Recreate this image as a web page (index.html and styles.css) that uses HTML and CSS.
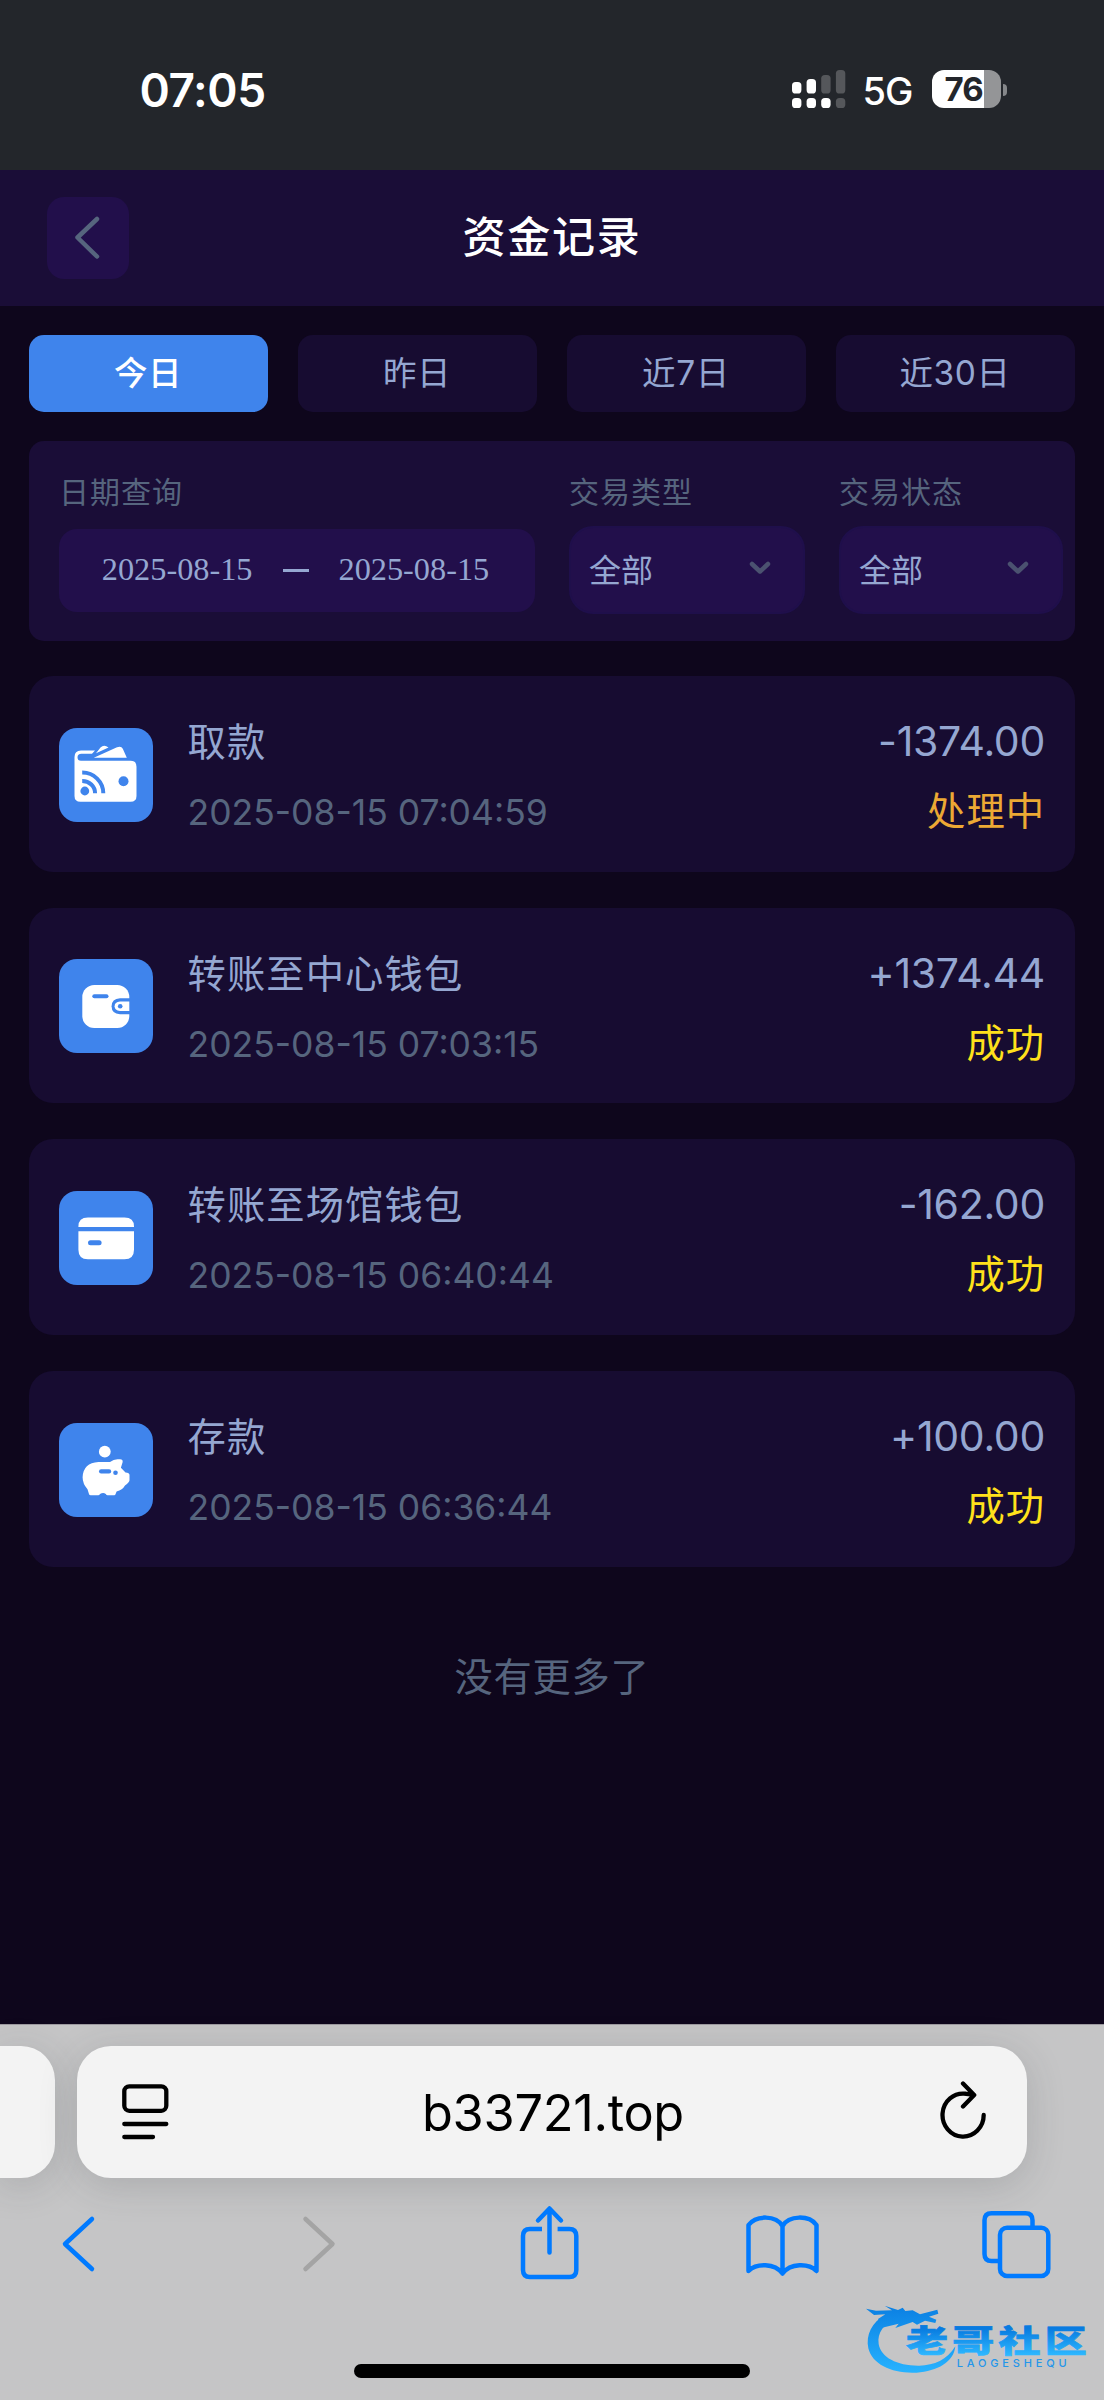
FILE: index.html
```html
<!DOCTYPE html>
<html lang="zh-CN">
<head>
<meta charset="utf-8">
<title>资金记录</title>
<link rel="stylesheet" href="styles.css">
</head>
<body>
<div class="phone">
  <div class="status-bar">
    <div class="clock">07:05</div>
    <div class="status-right">
      <svg class="signal" viewBox="0 0 54 38">
        <g fill="#fff"><rect x="0" y="12" width="9.4" height="11.5" rx="3.6"/><rect x="14.6" y="9" width="9.4" height="14.5" rx="3.6"/><rect x="0" y="28" width="9.4" height="10" rx="3.6"/><rect x="14.6" y="28" width="9.4" height="10" rx="3.6"/><rect x="29.2" y="28" width="9.4" height="10" rx="3.6"/></g>
        <g fill="#55575b"><rect x="29.2" y="5" width="9.4" height="18.5" rx="3.6"/><rect x="43.9" y="0" width="9.4" height="23.5" rx="3.6"/><rect x="43.9" y="28" width="9.4" height="10" rx="3.6"/></g>
      </svg>
      <span class="network">5G</span>
      <div class="battery"><span>76</span></div>
      <i class="battery-nub"></i>
    </div>
  </div>

  <header class="header">
    <button class="back" aria-label="返回"><svg viewBox="0 0 82 82"><path d="M50 22 30.500 40.500 50 59.500"/></svg></button>
    <h1>资金记录</h1>
  </header>

  <main class="content">
    <nav class="tabs">
      <button class="tab active">今日</button>
      <button class="tab">昨日</button>
      <button class="tab">近7日</button>
      <button class="tab">近30日</button>
    </nav>

    <section class="filter">
      <div class="field date-field">
        <label>日期查询</label>
        <div class="date-range"><span>2025-08-15</span><i></i><span>2025-08-15</span></div>
      </div>
      <div class="field type-field">
        <label>交易类型</label>
        <div class="select"><span>全部</span><svg viewBox="0 0 22 14"><path d="M3 3 11 10.500 19 3"/></svg></div>
      </div>
      <div class="field state-field">
        <label>交易状态</label>
        <div class="select"><span>全部</span><svg viewBox="0 0 22 14"><path d="M3 3 11 10.500 19 3"/></svg></div>
      </div>
    </section>

    <section class="records">
      <article class="record">
        <svg class="tile" viewBox="0 0 94 94">
          <path class="w" d="M15.500 68V29q0-6.500 6.500-6.500h14l-3 3.200H22.500q-4 0-4 3.500t3.500 3.500h49.500q6 0 6 6V68q0 5.800-6 5.800h-50q-6 0-6-5.800Z"/>
          <path class="w" d="M34.800 29.800 58 19.300q4.200-1.800 5.800 1.500l4 9ZM37 25.200l4.500-5.700q3.500-3.400 8 0Z"/>
          <circle class="b" cx="25.800" cy="63" r="4.400"/><circle class="b" cx="64.500" cy="53.300" r="5"/>
          <path class="line" d="M23.200 52.900a12.800 12.400 0 0 1 12.900 12.400M23.200 44.500a21 20.800 0 0 1 21.100 20.800"/>
        </svg>
        <div class="info"><h2>取款</h2><time>2025-08-15 07:04:59</time></div>
        <div class="result"><b>-1374.00</b><span class="pending">处理中</span></div>
      </article>
      <article class="record">
        <svg class="tile" viewBox="0 0 94 94">
          <rect class="w" x="23.300" y="26" width="47" height="43" rx="12"/>
          <path class="bar" d="M35.300 37.300h12.200"/>
          <path class="b" d="M71 39.300H61q-8.400.5-8.400 8t8.400 8h10Z"/>
          <path class="w" d="M70.300 42.600H61q-5.400.4-5.400 4.700t5.400 4.700h9.300Z"/>
          <circle class="b" cx="61.200" cy="47.200" r="2.300"/>
        </svg>
        <div class="info"><h2>转账至中心钱包</h2><time>2025-08-15 07:03:15</time></div>
        <div class="result"><b>+1374.44</b><span>成功</span></div>
      </article>
      <article class="record">
        <svg class="tile" viewBox="0 0 94 94">
          <path class="w" d="M19.400 36v-.600q0-9 9.500-9h36.600q9.500 0 9.500 9v.600ZM19.400 40.200H75v18.500q0 9.500-9.500 9.500H28.900q-9.500 0-9.500-9.500Z"/>
          <rect class="b" x="29" y="49.200" width="13.600" height="5" rx="2.500"/>
        </svg>
        <div class="info"><h2>转账至场馆钱包</h2><time>2025-08-15 06:40:44</time></div>
        <div class="result"><b>-162.00</b><span>成功</span></div>
      </article>
      <article class="record">
        <svg class="tile" viewBox="0 0 94 94">
          <circle class="w" cx="45.800" cy="28.700" r="5.900"/>
          <path class="w" d="M39.500 39H51q3.500-2.600 7.500-2.700h2.500q3.200.2 2.600 3l-1.700 5.500 4.600 4.700q4 .2 4 2.500v5.200q0 1.800-4.500 5.400-2.500 4.500-8.400 6l-1 2.500q-.3 1.200-1.500 1.200h-6.500q-1.200 0-1.800-1.200-2.500-2.300-5.800 0-.6 1.200-1.800 1.200h-7.500q-1.500 0-1.800-1.500l-1.400-4.600q-4.900-5.500-4.900-12Q24.200 40 39.500 39Z"/>
          <rect class="b" x="40" y="46.300" width="12.200" height="4.300" rx="2.100"/><circle class="b" cx="56.500" cy="49.800" r="2.300"/>
        </svg>
        <div class="info"><h2>存款</h2><time>2025-08-15 06:36:44</time></div>
        <div class="result"><b>+100.00</b><span>成功</span></div>
      </article>
    </section>
    <p class="end">没有更多了</p>
  </main>

  <footer class="browser">
    <div class="address-row">
      <div class="previous-page"></div>
      <div class="address">
        <svg class="reader" viewBox="0 0 48 56"><rect x="2.300" y="2.300" width="42" height="24.500" rx="5"/><path d="M2.300 40h42M2.300 53H31"/></svg>
        <span>b33721.top</span>
        <svg class="reload" viewBox="0 0 48 58"><path d="M25.500 12.700A20.600 21.500 0 1 0 43.700 34M23 2.500 34.200 14 23 25.500M32.500 13.500 24 12.700"/></svg>
      </div>
    </div>
    <div class="tools">
      <svg viewBox="0 0 80 80"><path d="M54 15 27 40l27 25"/></svg>
      <svg class="disabled" viewBox="0 0 80 80"><path d="m33.500 15 27 25-27 25"/></svg>
      <svg viewBox="0 0 80 80"><path d="M35 25H23q-7 0-7 7v34q0 7 7 7h39.300q7 0 7-7V32q0-7-7-7H50.600" stroke-linecap="butt"/><path d="M42.500 48.500V5M31 16.500 42.500 4.500 54 16.500"/></svg>
      <svg viewBox="0 0 80 80"><path d="M41.500 69.500V22C35 11 15 11 7.500 21v46c8-8 26-8 34 2.500 8-10.500 26-10.500 34-2.500V21C68 11 48 11 41.500 22"/></svg>
      <svg viewBox="0 0 80 80"><rect x="24" y="23.700" width="48.300" height="48.300" rx="7"/><path d="M24 57h-8.500q-7 0-7-7V16.300q0-7 7-7h34q7 0 7 7v7.400" stroke-linecap="butt"/></svg>
    </div>
    <div class="home-indicator"></div>
    <svg class="watermark" viewBox="0 0 762 330">
      <defs><linearGradient id="blue" gradientUnits="userSpaceOnUse" x1="0" y1="75" x2="0" y2="278"><stop offset="0" stop-color="#0a7fe2"/><stop offset="1" stop-color="#27b3ff"/></linearGradient>
      <linearGradient id="text-blue" x1="0" y1="0" x2="0" y2="1"><stop offset=".25" stop-color="#087be0"/><stop offset=".85" stop-color="#2db7ff"/></linearGradient></defs>
      <path fill="url(#blue)" d="M108 104C65 125 47 165 55 205c12 50 75 77 145 73 62-4 112-32 116-79-25 41-63 57-108 58-65 1-115-24-122-65-5-34 15-61 58-81Z"/>
      <path fill="url(#blue)" d="m48 86 30 6 48-1-22-14 40 13 14-7 8 10 22-2 22 12 52-14 3 12-28 9 22 9-3 10-31-7-24 12-13-8-24 8-28 10 10-13-50 12-12-26 22-14-34 2Z"/>
      <text class="brand" x="168" y="294" textLength="542" transform="translate(0 5.500) scale(1 .72)" fill="url(#text-blue)" stroke="url(#text-blue)" stroke-width="3">老哥社区</text>
      <text class="brand-latin" x="320" y="260" textLength="330">LAOGESHEQU</text>
    </svg>
  </footer>
</div>
</body>
</html>
```
FILE: styles.css
```css
* { box-sizing: border-box; }
body { margin: 0; background: #0e061c; }
body, button { font-family: Inter, "Noto Sans CJK SC", sans-serif; }
button { border: 0; padding: 0; }
h1, h2, p { margin: 0; font-weight: 400; }
svg { display: block; flex: none; }

.phone { width: 1104px; height: 2400px; display: flex; flex-direction: column; overflow: hidden; }

/* Phone status bar */
.status-bar { height: 170px; background: #23262b; color: #fff; padding: 60px 97.500px 0 139.500px; display: flex; justify-content: space-between; }
.clock { font-size: 46px; font-weight: 600; line-height: 60px; letter-spacing: -.400px; }
.status-right { height: 60px; display: flex; align-items: center; }
.signal { width: 54px; height: 38px; margin-top: -2px; }
.network { font-size: 38px; font-weight: 500; width: 86px; padding-left: 17px; letter-spacing: -1px; padding-top: 2px; }
.battery { width: 69px; height: 38px; margin-top: -2px; border-radius: 12px; background: linear-gradient(90deg, #fff 52px, #949597 52px); color: #23262b; }
.battery span { display: block; padding-left: 13px; font-size: 33px; line-height: 38px; font-weight: 700; letter-spacing: -1px; }
.battery-nub { width: 4px; height: 12px; margin-left: 2px; background: #85878a; border-radius: 0 5px 5px 0; }

/* Page header */
.header { height: 136px; background: #1a0d37; display: grid; grid-template-columns: 82px 1fr 82px; align-items: center; padding: 0 47px; }
.back { width: 82px; height: 82px; border-radius: 17px; background: #220f4b; }
.back svg { width: 82px; height: 82px; fill: none; stroke: #56657e; stroke-width: 4.500; stroke-linecap: round; stroke-linejoin: round; }
.header h1 { color: #fff; text-align: center; font-size: 43px; font-weight: 500; letter-spacing: 1.700px; line-height: 62px; padding-bottom: 2px; }

.content { height: 1718px; padding: 29px 29px 0; }
.tabs { display: grid; grid-template-columns: repeat(4, 1fr); gap: 30px; }
.tab { height: 77px; border-radius: 15px; background: #170c31; color: #95a7d1; font-size: 33.500px; letter-spacing: .600px; line-height: 77px; padding-right: 1px; }
.tab.active { background: #3f84ec; color: #fff; font-weight: 500; }

/* Search filters */
.filter { height: 200px; margin-top: 29px; border-radius: 15px; background: #1a0d37; display: flex; padding: 29px 12px 0 30px; }
.field label { display: block; color: #56657e; font-size: 30px; letter-spacing: 1px; line-height: 44px; }
.date-field { width: 476px; }
.type-field { width: 236px; margin-left: 34px; }
.state-field { width: 224px; margin-left: 34px; }
.date-range { height: 83px; margin-top: 15px; border-radius: 18px; background: #220f4b; display: flex; align-items: center; justify-content: center; color: #95a7d1; font: 32.300px "Liberation Serif", serif; padding: 0 3px 2px 0; }
.date-range i { width: 26px; height: 2.500px; background: #95a7d1; margin: 2px 30px 0; }
.select { height: 88px; margin-top: 12px; border-radius: 24px; border: 2px solid #1f0f4b; background: #220f4b; display: flex; align-items: center; justify-content: space-between; padding: 0 32px 5px 18px; color: #95a7d1; font-size: 32px; }
.select svg { width: 22px; height: 14px; fill: none; stroke: #4b5270; stroke-width: 4.500; stroke-linecap: round; stroke-linejoin: round; }

/* Transactions */
.records { margin-top: 35px; display: grid; gap: 36px; }
.record { height: 195.700px; border-radius: 24px; background: #170c31; display: flex; padding: 0 30px 0 29.500px; }
.tile { width: 94px; height: 94px; margin-top: 51.500px; border-radius: 18px; background: #3f84ec; }
.w { fill: #fff; }
.b { fill: #3f84ec; }
.line { fill: none; stroke: #3f84ec; stroke-width: 4; }
.bar { fill: none; stroke: #3f84ec; stroke-width: 4; stroke-linecap: round; }
.info { flex: 1; padding: 36px 0 0 35px; }
.info h2, .result b { display: block; height: 60px; line-height: 60px; color: #95a7d1; font-weight: 400; }
.info h2 { font-size: 38.300px; letter-spacing: 1.100px; }
.info time { display: block; margin-top: 11px; color: #56657e; font-size: 35.500px; line-height: 60px; }
.result { padding-top: 35px; text-align: right; }
.result b { font-size: 41px; letter-spacing: -.300px; }
.result span { display: block; margin-top: 10px; color: #ffe11b; font-size: 38.300px; letter-spacing: 1px; line-height: 60px; }
.result .pending { color: #eca934; }
.end { margin-top: 80px; text-align: center; color: #56657e; font-size: 38.300px; letter-spacing: .700px; line-height: 60px; }

/* Browser controls */
.browser { position: relative; height: 376px; background: #c5c5c6; border-top: 1px solid #9c999f; padding-top: 21px; }
.address-row { display: flex; gap: 22px; height: 132px; }
.previous-page, .address { background: #f3f3f3; box-shadow: 0 7px 38px rgba(50, 55, 60, .18); }
.previous-page { width: 55px; border-radius: 0 34px 34px 0; }
.address { width: 950px; border-radius: 34px; display: flex; align-items: center; justify-content: space-between; padding: 0 39px 0 45px; color: #000; font-size: 50.500px; }
.address svg { fill: none; stroke: #000; stroke-width: 4.300; stroke-linecap: round; stroke-linejoin: round; }
.address span { letter-spacing: -.300px; padding-right: 4px; }
.reader { width: 48px; height: 56px; }
.reload { width: 48px; height: 58px; margin-top: -4px; }
.tools { display: flex; justify-content: space-between; padding: 26px 48.500px 0 37.500px; }
.tools svg { width: 80px; height: 80px; fill: none; stroke: #007aff; stroke-width: 4.500; stroke-linecap: round; stroke-linejoin: round; }
.tools .disabled { stroke: #a4a4a4; }
.home-indicator { width: 396px; height: 14px; margin: 80px auto 0; border-radius: 7px; background: #000; }
.watermark { position: absolute; right: 0; bottom: 10px; width: 254px; height: 110px; }
.brand { font-family: "Noto Sans CJK SC", sans-serif; font-weight: 900; font-size: 126px; }
.brand-latin { font-family: Inter, sans-serif; font-size: 33px; font-weight: 500; fill: #2496ea; }
```
